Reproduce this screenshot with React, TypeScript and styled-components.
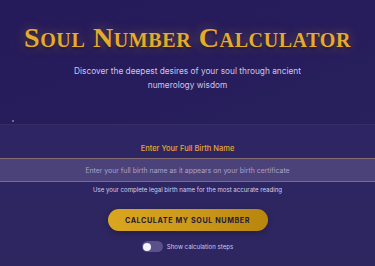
import { useState } from 'react';
import styled, { createGlobalStyle } from 'styled-components';

const GlobalStyle = createGlobalStyle`
  html, body {
    margin: 0;
    padding: 0;
    background: #251b59;
  }
  body {
    font-family: Inter, 'Noto Sans', sans-serif;
  }
`;

const Page = styled.div`
  position: relative;
  width: 375px;
  height: 266px;
  overflow: hidden;
  background: linear-gradient(160deg, #251a5a 0%, #271d5c 40%, #2b2660 100%);
`;

const Header = styled.header`
  display: flex;
  flex-direction: column;
  align-items: center;
  padding-top: 23px;
  height: 101px;
  box-sizing: border-box;
`;

const Title = styled.h1`
  margin: 0;
  font-family: 'Liberation Serif', 'DejaVu Serif', serif;
  font-variant: small-caps;
  font-weight: 700;
  font-size: 28px;
  line-height: 30px;
  letter-spacing: 0.6px;
  color: #e5ab2c;
  text-shadow: 0 0 12px rgba(229, 171, 44, 0.4), 0 2px 3px rgba(0, 0, 0, 0.45);
  white-space: nowrap;
`;

const Subtitle = styled.p`
  margin: 12px 0 0;
  width: 232px;
  text-align: center;
  font-size: 8.3px;
  line-height: 13.5px;
  color: #cdc6e6;
`;

const Star = styled.span`
  position: absolute;
  left: 12px;
  top: 120px;
  width: 2px;
  height: 2px;
  border-radius: 50%;
  background: #8a80b8;
`;

const Panel = styled.section`
  display: flex;
  flex-direction: column;
  align-items: center;
  margin-top: 23px;
  padding-top: 18px;
  height: 142px;
  box-sizing: border-box;
  background: linear-gradient(180deg, #2e2664 0%, #2d265f 100%);
  border-top: 1px solid rgba(255, 255, 255, 0.04);
`;

const Label = styled.label`
  font-size: 7.5px;
  font-weight: 500;
  color: #e2a92f;
  line-height: 12px;
`;

const NameInput = styled.input`
  margin-top: 3px;
  width: 100%;
  height: 24px;
  box-sizing: border-box;
  border: none;
  border-top: 1px solid rgba(200, 160, 110, 0.45);
  border-bottom: 1px solid rgba(200, 160, 110, 0.45);
  background: #4b4279;
  color: #fff;
  text-align: center;
  font-family: Inter, 'Noto Sans', sans-serif;
  font-size: 6.9px;
  outline: none;

  &::placeholder {
    color: #aaa1cb;
  }
`;

const Help = styled.p`
  margin: 3px 0 0;
  font-size: 6.1px;
  line-height: 10px;
  color: #d6d1e8;
`;

const CalcButton = styled.button`
  margin-top: 14px;
  width: 160px;
  height: 22px;
  padding: 0;
  border: none;
  border-radius: 11px;
  background: linear-gradient(90deg, #daa61f 0%, #c9961a 60%, #b8850d 100%);
  color: #1e1935;
  font-family: Inter, 'Noto Sans', sans-serif;
  font-size: 7.2px;
  font-weight: 700;
  letter-spacing: 0.6px;
  white-space: nowrap;
  cursor: pointer;
  box-shadow: 0 2px 6px rgba(0, 0, 0, 0.25);
`;

const ToggleRow = styled.div`
  display: flex;
  align-items: center;
  gap: 4px;
  margin-top: 10px;
`;

const Track = styled.button<{ on: boolean }>`
  position: relative;
  width: 21px;
  height: 11px;
  padding: 0;
  border: none;
  border-radius: 6px;
  background: ${({ on }) => (on ? '#d8a424' : '#5b5189')};
  cursor: pointer;
`;

const Knob = styled.span<{ on: boolean }>`
  position: absolute;
  top: 1.5px;
  left: ${({ on }) => (on ? '11.5px' : '1.5px')};
  width: 8px;
  height: 8px;
  border-radius: 50%;
  background: #f4f2fb;
`;

const ToggleText = styled.span`
  font-size: 6.1px;
  color: #cec8e6;
`;

export default function App() {
  const [steps, setSteps] = useState(false);
  return (
    <Page>
      <GlobalStyle />
      <Header>
        <Title>Soul Number Calculator</Title>
        <Subtitle>
          Discover the deepest desires of your soul through ancient numerology wisdom
        </Subtitle>
      </Header>
      <Star />
      <Panel>
        <Label htmlFor="birth-name">Enter Your Full Birth Name</Label>
        <NameInput
          id="birth-name"
          placeholder="Enter your full birth name as it appears on your birth certificate"
        />
        <Help>Use your complete legal birth name for the most accurate reading</Help>
        <CalcButton>CALCULATE MY SOUL NUMBER</CalcButton>
        <ToggleRow>
          <Track on={steps} onClick={() => setSteps(!steps)}>
            <Knob on={steps} />
          </Track>
          <ToggleText>Show calculation steps</ToggleText>
        </ToggleRow>
      </Panel>
    </Page>
  );
}
